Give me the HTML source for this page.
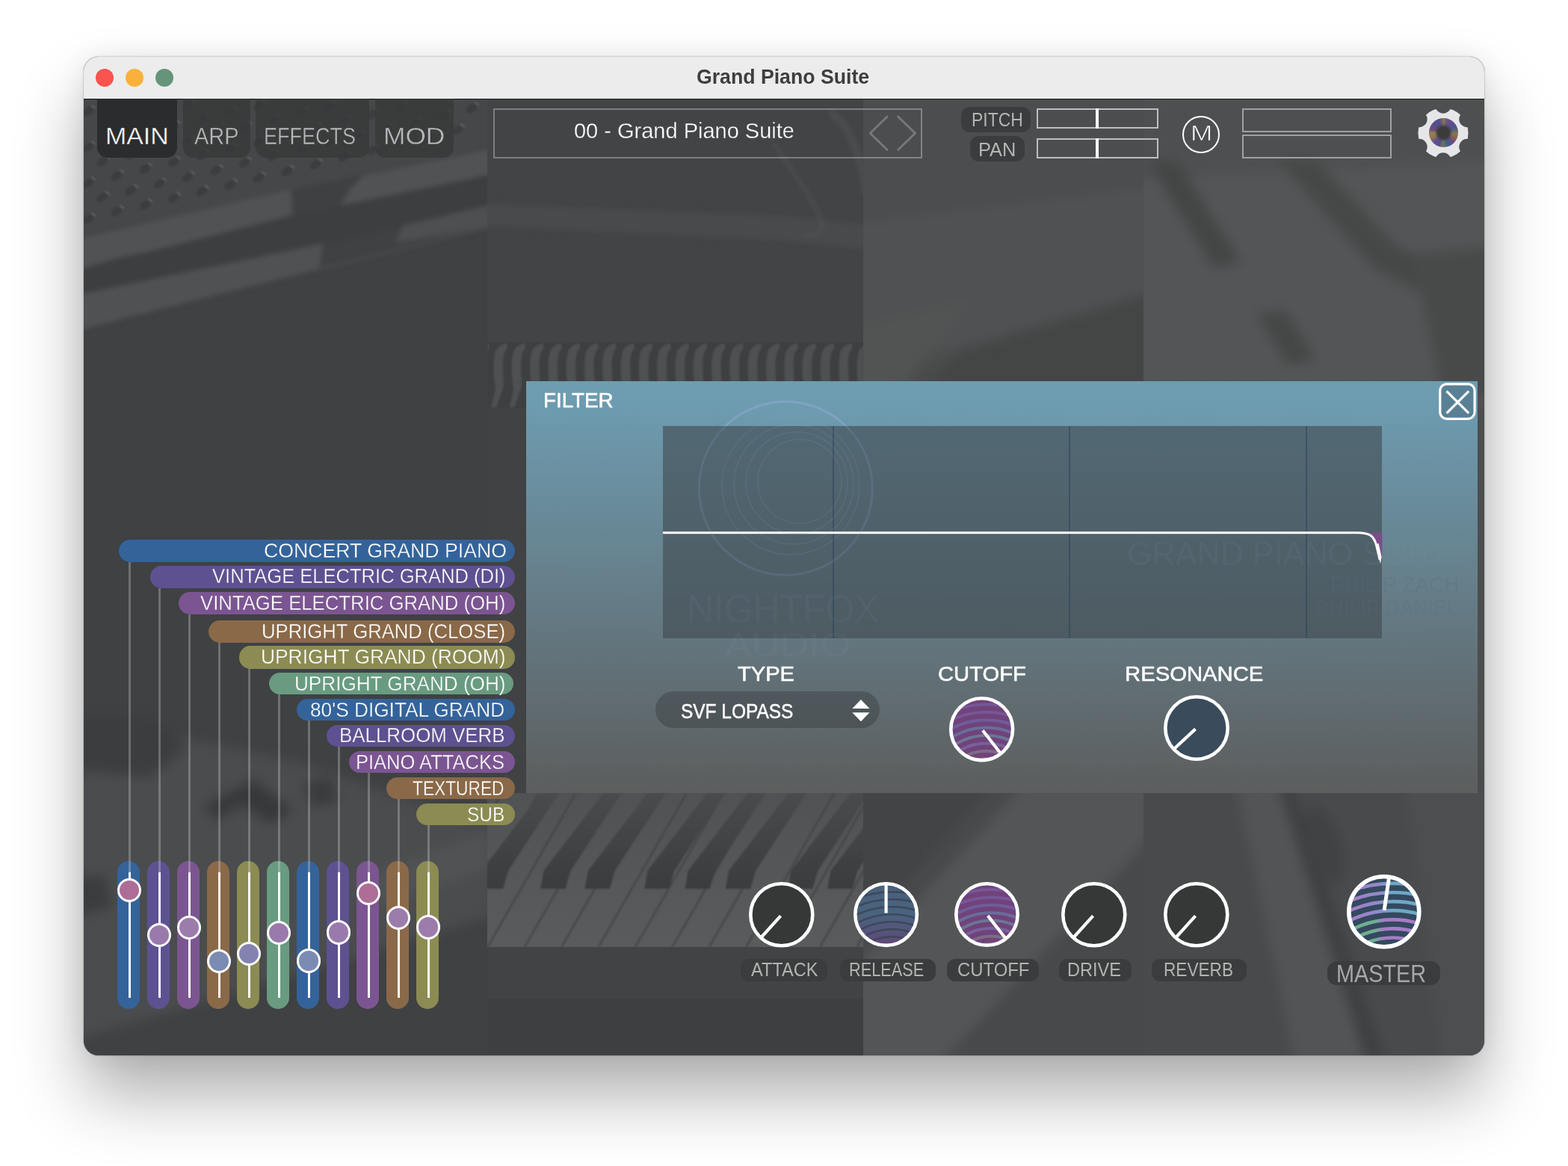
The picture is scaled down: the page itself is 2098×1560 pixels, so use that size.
<!DOCTYPE html><html><head><meta charset="utf-8"><title>Grand Piano Suite</title><style>
html,body{margin:0;padding:0;background:#fff}
body{width:2098px;height:1560px;position:relative;overflow:hidden;font-family:"Liberation Sans",sans-serif;}
.a{position:absolute}
.shadow{position:absolute;left:112px;top:75.5px;width:1874px;height:1336.5px;border-radius:20px;box-shadow:0 53px 92px rgba(0,0,0,.32),0 0 34px rgba(0,0,0,.07),0 0 2px rgba(0,0,0,.45);}
.win{position:absolute;left:112px;top:75.5px;width:1874px;height:1336.5px;border-radius:20px;overflow:hidden;background:#434547}
.stage{position:absolute;left:-112px;top:-75.5px;width:2098px;height:1560px}
.titlebar{position:absolute;left:112px;top:75px;width:1874px;height:57px;background:#ececec;box-shadow:0 1px 0 #1c1c1c}
.tl{position:absolute;width:24px;height:24px;border-radius:50%;top:92px}
.tab{position:absolute;top:132px;height:79px;border-radius:0 0 14px 14px;background:rgba(55,57,58,.8)}
.tab.on{background:#2b2c2d}
.lbl{position:absolute;background:#3a3c3d}
.pill{position:absolute;border-radius:15px}
.vline{position:absolute;width:3px;background:rgba(255,255,255,.25)}
.track{position:absolute;width:30px;border-radius:15px}
.wl{position:absolute;width:3.4px;background:#fff}
.thumb{position:absolute;width:32.4px;height:32.4px;border-radius:50%;box-sizing:border-box;border:3.5px solid #fff}
.t{position:absolute;white-space:nowrap;transform-origin:0 0}
</style></head><body>
<div class="shadow"></div><div class="win"><div class="stage">
<svg class="a" style="left:112px;top:132px" width="1874" height="1280" viewBox="112 132 1874 1280"><defs><filter id="b3" color-interpolation-filters="sRGB" x="-5%" y="-5%" width="110%" height="110%"><feGaussianBlur stdDeviation="3"/></filter><filter id="b8" color-interpolation-filters="sRGB" x="-10%" y="-10%" width="120%" height="120%"><feGaussianBlur stdDeviation="8"/></filter><filter id="b1" color-interpolation-filters="sRGB" x="-5%" y="-5%" width="110%" height="110%"><feGaussianBlur stdDeviation="1.2"/></filter><clipPath id="cL"><rect x="112" y="132" width="540" height="1280"/></clipPath><clipPath id="cM"><rect x="652" y="132" width="503" height="1280"/></clipPath><clipPath id="cR1"><rect x="1155" y="132" width="375" height="1280"/></clipPath><clipPath id="cR2"><rect x="1530" y="132" width="456" height="1280"/></clipPath><linearGradient id="bk" x1="0" y1="0" x2="0" y2="1"><stop offset="0" stop-color="#494b4d"/><stop offset="1" stop-color="#3a3c3e"/></linearGradient><linearGradient id="wk" x1="0" y1="0" x2="0" y2="1"><stop offset="0" stop-color="#505254"/><stop offset="1" stop-color="#595b5d"/></linearGradient><pattern id="ham" x="655" y="459" width="24.3" height="86" patternUnits="userSpaceOnUse"><path d="M2 86 L8 62 C5 44 4 24 8 11 C11 4 18 1 23 0 L24 7 C19 11 18 20 18 33 C18 46 21 56 16 66 L9 86 Z" fill="#4e5052"/></pattern></defs><rect x="112" y="132" width="540" height="1280" fill="#3f4143"/><rect x="652" y="132" width="503" height="1280" fill="#424446"/><rect x="1155" y="132" width="375" height="1280" fill="#4a4c4c"/><rect x="1530" y="132" width="456" height="1280" fill="#4c4e4e"/><g clip-path="url(#cL)"><g filter="url(#b3)"><polygon points="100,120 660,120 660,196 100,318" fill="#454749"/><polygon points="100,320 389.6,253.4 392,288 272,323 163,344 100,362" fill="#505254"/><polygon points="485.7,234.7 660,198 660,233 453.7,277.4 467,253.4" fill="#505254"/><polygon points="389.6,253.4 485.7,234.7 467,253.4 453.7,277.4 392,288" fill="#3e4042"/><polygon points="100,362 392,288 660,233 660,272 432,326 100,395" fill="#3c3e40"/><polygon points="100,395 432.3,325.5 427,360.2 100,443" fill="#4f5153"/><polygon points="539.1,301.4 660,273 660,302 528.4,325.5" fill="#4d4f51"/><path d="M427 360.2 L660 302" stroke="#4b4d4f" stroke-width="3" fill="none"/></g><g filter="url(#b1)"><ellipse cx="118" cy="149" rx="8" ry="5" transform="rotate(-35 118 149)" fill="#3b3d3f"/><ellipse cx="125" cy="143" rx="4" ry="1.6" transform="rotate(35 125 143)" fill="#5a5c5e"/><ellipse cx="137" cy="168" rx="8" ry="5" transform="rotate(-35 137 168)" fill="#3b3d3f"/><ellipse cx="144" cy="162" rx="4" ry="1.6" transform="rotate(35 144 162)" fill="#5a5c5e"/><ellipse cx="175" cy="159" rx="8" ry="5" transform="rotate(-35 175 159)" fill="#3b3d3f"/><ellipse cx="182" cy="153" rx="4" ry="1.6" transform="rotate(35 182 153)" fill="#5a5c5e"/><ellipse cx="213" cy="150" rx="8" ry="5" transform="rotate(-35 213 150)" fill="#3b3d3f"/><ellipse cx="220" cy="144" rx="4" ry="1.6" transform="rotate(35 220 144)" fill="#5a5c5e"/><ellipse cx="251" cy="141" rx="8" ry="5" transform="rotate(-35 251 141)" fill="#3b3d3f"/><ellipse cx="258" cy="135" rx="4" ry="1.6" transform="rotate(35 258 135)" fill="#5a5c5e"/><ellipse cx="118" cy="197" rx="8" ry="5" transform="rotate(-35 118 197)" fill="#3b3d3f"/><ellipse cx="125" cy="191" rx="4" ry="1.6" transform="rotate(35 125 191)" fill="#5a5c5e"/><ellipse cx="156" cy="187" rx="8" ry="5" transform="rotate(-35 156 187)" fill="#3b3d3f"/><ellipse cx="163" cy="181" rx="4" ry="1.6" transform="rotate(35 163 181)" fill="#5a5c5e"/><ellipse cx="194" cy="178" rx="8" ry="5" transform="rotate(-35 194 178)" fill="#3b3d3f"/><ellipse cx="201" cy="172" rx="4" ry="1.6" transform="rotate(35 201 172)" fill="#5a5c5e"/><ellipse cx="232" cy="169" rx="8" ry="5" transform="rotate(-35 232 169)" fill="#3b3d3f"/><ellipse cx="239" cy="163" rx="4" ry="1.6" transform="rotate(35 239 163)" fill="#5a5c5e"/><ellipse cx="270" cy="160" rx="8" ry="5" transform="rotate(-35 270 160)" fill="#3b3d3f"/><ellipse cx="277" cy="154" rx="4" ry="1.6" transform="rotate(35 277 154)" fill="#5a5c5e"/><ellipse cx="308" cy="151" rx="8" ry="5" transform="rotate(-35 308 151)" fill="#3b3d3f"/><ellipse cx="315" cy="145" rx="4" ry="1.6" transform="rotate(35 315 145)" fill="#5a5c5e"/><ellipse cx="346" cy="142" rx="8" ry="5" transform="rotate(-35 346 142)" fill="#3b3d3f"/><ellipse cx="353" cy="136" rx="4" ry="1.6" transform="rotate(35 353 136)" fill="#5a5c5e"/><ellipse cx="137" cy="216" rx="8" ry="5" transform="rotate(-35 137 216)" fill="#3b3d3f"/><ellipse cx="144" cy="210" rx="4" ry="1.6" transform="rotate(35 144 210)" fill="#5a5c5e"/><ellipse cx="175" cy="207" rx="8" ry="5" transform="rotate(-35 175 207)" fill="#3b3d3f"/><ellipse cx="182" cy="201" rx="4" ry="1.6" transform="rotate(35 182 201)" fill="#5a5c5e"/><ellipse cx="213" cy="198" rx="8" ry="5" transform="rotate(-35 213 198)" fill="#3b3d3f"/><ellipse cx="220" cy="192" rx="4" ry="1.6" transform="rotate(35 220 192)" fill="#5a5c5e"/><ellipse cx="251" cy="189" rx="8" ry="5" transform="rotate(-35 251 189)" fill="#3b3d3f"/><ellipse cx="258" cy="183" rx="4" ry="1.6" transform="rotate(35 258 183)" fill="#5a5c5e"/><ellipse cx="289" cy="180" rx="8" ry="5" transform="rotate(-35 289 180)" fill="#3b3d3f"/><ellipse cx="296" cy="174" rx="4" ry="1.6" transform="rotate(35 296 174)" fill="#5a5c5e"/><ellipse cx="327" cy="170" rx="8" ry="5" transform="rotate(-35 327 170)" fill="#3b3d3f"/><ellipse cx="334" cy="164" rx="4" ry="1.6" transform="rotate(35 334 164)" fill="#5a5c5e"/><ellipse cx="365" cy="161" rx="8" ry="5" transform="rotate(-35 365 161)" fill="#3b3d3f"/><ellipse cx="372" cy="155" rx="4" ry="1.6" transform="rotate(35 372 155)" fill="#5a5c5e"/><ellipse cx="403" cy="152" rx="8" ry="5" transform="rotate(-35 403 152)" fill="#3b3d3f"/><ellipse cx="410" cy="146" rx="4" ry="1.6" transform="rotate(35 410 146)" fill="#5a5c5e"/><ellipse cx="441" cy="143" rx="8" ry="5" transform="rotate(-35 441 143)" fill="#3b3d3f"/><ellipse cx="448" cy="137" rx="4" ry="1.6" transform="rotate(35 448 137)" fill="#5a5c5e"/><ellipse cx="118" cy="245" rx="8" ry="5" transform="rotate(-35 118 245)" fill="#3b3d3f"/><ellipse cx="125" cy="239" rx="4" ry="1.6" transform="rotate(35 125 239)" fill="#5a5c5e"/><ellipse cx="156" cy="235" rx="8" ry="5" transform="rotate(-35 156 235)" fill="#3b3d3f"/><ellipse cx="163" cy="229" rx="4" ry="1.6" transform="rotate(35 163 229)" fill="#5a5c5e"/><ellipse cx="194" cy="226" rx="8" ry="5" transform="rotate(-35 194 226)" fill="#3b3d3f"/><ellipse cx="201" cy="220" rx="4" ry="1.6" transform="rotate(35 201 220)" fill="#5a5c5e"/><ellipse cx="232" cy="217" rx="8" ry="5" transform="rotate(-35 232 217)" fill="#3b3d3f"/><ellipse cx="239" cy="211" rx="4" ry="1.6" transform="rotate(35 239 211)" fill="#5a5c5e"/><ellipse cx="270" cy="208" rx="8" ry="5" transform="rotate(-35 270 208)" fill="#3b3d3f"/><ellipse cx="277" cy="202" rx="4" ry="1.6" transform="rotate(35 277 202)" fill="#5a5c5e"/><ellipse cx="308" cy="199" rx="8" ry="5" transform="rotate(-35 308 199)" fill="#3b3d3f"/><ellipse cx="315" cy="193" rx="4" ry="1.6" transform="rotate(35 315 193)" fill="#5a5c5e"/><ellipse cx="346" cy="190" rx="8" ry="5" transform="rotate(-35 346 190)" fill="#3b3d3f"/><ellipse cx="353" cy="184" rx="4" ry="1.6" transform="rotate(35 353 184)" fill="#5a5c5e"/><ellipse cx="384" cy="181" rx="8" ry="5" transform="rotate(-35 384 181)" fill="#3b3d3f"/><ellipse cx="391" cy="175" rx="4" ry="1.6" transform="rotate(35 391 175)" fill="#5a5c5e"/><ellipse cx="422" cy="172" rx="8" ry="5" transform="rotate(-35 422 172)" fill="#3b3d3f"/><ellipse cx="429" cy="166" rx="4" ry="1.6" transform="rotate(35 429 166)" fill="#5a5c5e"/><ellipse cx="460" cy="162" rx="8" ry="5" transform="rotate(-35 460 162)" fill="#3b3d3f"/><ellipse cx="467" cy="156" rx="4" ry="1.6" transform="rotate(35 467 156)" fill="#5a5c5e"/><ellipse cx="498" cy="153" rx="8" ry="5" transform="rotate(-35 498 153)" fill="#3b3d3f"/><ellipse cx="505" cy="147" rx="4" ry="1.6" transform="rotate(35 505 147)" fill="#5a5c5e"/><ellipse cx="536" cy="144" rx="8" ry="5" transform="rotate(-35 536 144)" fill="#3b3d3f"/><ellipse cx="543" cy="138" rx="4" ry="1.6" transform="rotate(35 543 138)" fill="#5a5c5e"/><ellipse cx="137" cy="264" rx="8" ry="5" transform="rotate(-35 137 264)" fill="#3b3d3f"/><ellipse cx="144" cy="258" rx="4" ry="1.6" transform="rotate(35 144 258)" fill="#5a5c5e"/><ellipse cx="175" cy="255" rx="8" ry="5" transform="rotate(-35 175 255)" fill="#3b3d3f"/><ellipse cx="182" cy="249" rx="4" ry="1.6" transform="rotate(35 182 249)" fill="#5a5c5e"/><ellipse cx="213" cy="246" rx="8" ry="5" transform="rotate(-35 213 246)" fill="#3b3d3f"/><ellipse cx="220" cy="240" rx="4" ry="1.6" transform="rotate(35 220 240)" fill="#5a5c5e"/><ellipse cx="251" cy="237" rx="8" ry="5" transform="rotate(-35 251 237)" fill="#3b3d3f"/><ellipse cx="258" cy="231" rx="4" ry="1.6" transform="rotate(35 258 231)" fill="#5a5c5e"/><ellipse cx="289" cy="228" rx="8" ry="5" transform="rotate(-35 289 228)" fill="#3b3d3f"/><ellipse cx="296" cy="222" rx="4" ry="1.6" transform="rotate(35 296 222)" fill="#5a5c5e"/><ellipse cx="327" cy="218" rx="8" ry="5" transform="rotate(-35 327 218)" fill="#3b3d3f"/><ellipse cx="334" cy="212" rx="4" ry="1.6" transform="rotate(35 334 212)" fill="#5a5c5e"/><ellipse cx="365" cy="209" rx="8" ry="5" transform="rotate(-35 365 209)" fill="#3b3d3f"/><ellipse cx="372" cy="203" rx="4" ry="1.6" transform="rotate(35 372 203)" fill="#5a5c5e"/><ellipse cx="403" cy="200" rx="8" ry="5" transform="rotate(-35 403 200)" fill="#3b3d3f"/><ellipse cx="410" cy="194" rx="4" ry="1.6" transform="rotate(35 410 194)" fill="#5a5c5e"/><ellipse cx="441" cy="191" rx="8" ry="5" transform="rotate(-35 441 191)" fill="#3b3d3f"/><ellipse cx="448" cy="185" rx="4" ry="1.6" transform="rotate(35 448 185)" fill="#5a5c5e"/><ellipse cx="479" cy="182" rx="8" ry="5" transform="rotate(-35 479 182)" fill="#3b3d3f"/><ellipse cx="486" cy="176" rx="4" ry="1.6" transform="rotate(35 486 176)" fill="#5a5c5e"/><ellipse cx="517" cy="173" rx="8" ry="5" transform="rotate(-35 517 173)" fill="#3b3d3f"/><ellipse cx="524" cy="167" rx="4" ry="1.6" transform="rotate(35 524 167)" fill="#5a5c5e"/><ellipse cx="555" cy="164" rx="8" ry="5" transform="rotate(-35 555 164)" fill="#3b3d3f"/><ellipse cx="562" cy="158" rx="4" ry="1.6" transform="rotate(35 562 158)" fill="#5a5c5e"/><ellipse cx="593" cy="155" rx="8" ry="5" transform="rotate(-35 593 155)" fill="#3b3d3f"/><ellipse cx="600" cy="149" rx="4" ry="1.6" transform="rotate(35 600 149)" fill="#5a5c5e"/><ellipse cx="631" cy="145" rx="8" ry="5" transform="rotate(-35 631 145)" fill="#3b3d3f"/><ellipse cx="638" cy="139" rx="4" ry="1.6" transform="rotate(35 638 139)" fill="#5a5c5e"/><ellipse cx="118" cy="293" rx="8" ry="5" transform="rotate(-35 118 293)" fill="#3b3d3f"/><ellipse cx="125" cy="287" rx="4" ry="1.6" transform="rotate(35 125 287)" fill="#5a5c5e"/><ellipse cx="156" cy="283" rx="8" ry="5" transform="rotate(-35 156 283)" fill="#3b3d3f"/><ellipse cx="163" cy="277" rx="4" ry="1.6" transform="rotate(35 163 277)" fill="#5a5c5e"/><ellipse cx="194" cy="274" rx="8" ry="5" transform="rotate(-35 194 274)" fill="#3b3d3f"/><ellipse cx="201" cy="268" rx="4" ry="1.6" transform="rotate(35 201 268)" fill="#5a5c5e"/><ellipse cx="232" cy="265" rx="8" ry="5" transform="rotate(-35 232 265)" fill="#3b3d3f"/><ellipse cx="239" cy="259" rx="4" ry="1.6" transform="rotate(35 239 259)" fill="#5a5c5e"/><ellipse cx="270" cy="256" rx="8" ry="5" transform="rotate(-35 270 256)" fill="#3b3d3f"/><ellipse cx="277" cy="250" rx="4" ry="1.6" transform="rotate(35 277 250)" fill="#5a5c5e"/><ellipse cx="308" cy="247" rx="8" ry="5" transform="rotate(-35 308 247)" fill="#3b3d3f"/><ellipse cx="315" cy="241" rx="4" ry="1.6" transform="rotate(35 315 241)" fill="#5a5c5e"/><ellipse cx="346" cy="238" rx="8" ry="5" transform="rotate(-35 346 238)" fill="#3b3d3f"/><ellipse cx="353" cy="232" rx="4" ry="1.6" transform="rotate(35 353 232)" fill="#5a5c5e"/><ellipse cx="384" cy="229" rx="8" ry="5" transform="rotate(-35 384 229)" fill="#3b3d3f"/><ellipse cx="391" cy="223" rx="4" ry="1.6" transform="rotate(35 391 223)" fill="#5a5c5e"/><ellipse cx="422" cy="220" rx="8" ry="5" transform="rotate(-35 422 220)" fill="#3b3d3f"/><ellipse cx="429" cy="214" rx="4" ry="1.6" transform="rotate(35 429 214)" fill="#5a5c5e"/><ellipse cx="460" cy="210" rx="8" ry="5" transform="rotate(-35 460 210)" fill="#3b3d3f"/><ellipse cx="467" cy="204" rx="4" ry="1.6" transform="rotate(35 467 204)" fill="#5a5c5e"/><ellipse cx="498" cy="201" rx="8" ry="5" transform="rotate(-35 498 201)" fill="#3b3d3f"/><ellipse cx="505" cy="195" rx="4" ry="1.6" transform="rotate(35 505 195)" fill="#5a5c5e"/><ellipse cx="536" cy="192" rx="8" ry="5" transform="rotate(-35 536 192)" fill="#3b3d3f"/><ellipse cx="543" cy="186" rx="4" ry="1.6" transform="rotate(35 543 186)" fill="#5a5c5e"/><ellipse cx="574" cy="183" rx="8" ry="5" transform="rotate(-35 574 183)" fill="#3b3d3f"/><ellipse cx="581" cy="177" rx="4" ry="1.6" transform="rotate(35 581 177)" fill="#5a5c5e"/><ellipse cx="612" cy="174" rx="8" ry="5" transform="rotate(-35 612 174)" fill="#3b3d3f"/><ellipse cx="619" cy="168" rx="4" ry="1.6" transform="rotate(35 619 168)" fill="#5a5c5e"/></g><g filter="url(#b8)"><polygon points="100,1010 240,985 400,1020 660,1108 660,1225 100,1392" fill="#4a4c4e"/><polygon points="100,960 200,960 250,1000 200,1040 100,1030" fill="#3b3d3f"/><polygon points="272,1078 340,1043 392,1085 362,1102 322,1076 292,1098" fill="#36383a"/><polygon points="405,1050 440,1040 454,1070 420,1080" fill="#383a3c"/><polygon points="100,1175 140,1170 150,1215 100,1225" fill="#3a3c3e"/><polygon points="470,1180 660,1110 660,1160 500,1215" fill="#505254"/></g></g><g clip-path="url(#cM)"><g filter="url(#b3)"><polygon points="640,272 1040,288 1160,300 1160,334 1040,322 640,302" fill="#484a4c"/><path d="M1034 190 C1062 232 1092 272 1099 296 C1103 311 1090 319 1072 314" stroke="#505254" stroke-width="3.5" fill="none"/><path d="M1110 150 C1135 165 1150 200 1160 260" stroke="#4b4d4f" stroke-width="10" fill="none"/></g><rect x="652" y="545" width="503" height="516" fill="#404244"/><rect x="652" y="458" width="503" height="88" fill="#3d3f41"/><g filter="url(#b1)"><rect x="652" y="459" width="503" height="86" fill="url(#ham)"/></g><rect x="652" y="1061" width="503" height="206" fill="url(#wk)"/><rect x="652" y="1267" width="503" height="69" fill="#414345"/><rect x="652" y="1336" width="503" height="80" fill="#3d3f41"/><g filter="url(#b1)"><path d="M553.7 1267 L671.7 1061" stroke="#45474a" stroke-width="2.5"/><path d="M603.1 1267 L721.1 1061" stroke="#45474a" stroke-width="2.5"/><path d="M652.5 1267 L770.5 1061" stroke="#45474a" stroke-width="2.5"/><path d="M701.9 1267 L819.9 1061" stroke="#45474a" stroke-width="2.5"/><path d="M751.3 1267 L869.3 1061" stroke="#45474a" stroke-width="2.5"/><path d="M800.7 1267 L918.7 1061" stroke="#45474a" stroke-width="2.5"/><path d="M850.1 1267 L968.1 1061" stroke="#45474a" stroke-width="2.5"/><path d="M899.5 1267 L1017.5 1061" stroke="#45474a" stroke-width="2.5"/><path d="M948.9 1267 L1066.9 1061" stroke="#45474a" stroke-width="2.5"/><path d="M998.3 1267 L1116.3 1061" stroke="#45474a" stroke-width="2.5"/><path d="M1047.7 1267 L1165.7 1061" stroke="#45474a" stroke-width="2.5"/><path d="M1097.1 1267 L1215.1 1061" stroke="#45474a" stroke-width="2.5"/><path d="M1146.5 1267 L1264.5 1061" stroke="#45474a" stroke-width="2.5"/><path d="M1195.9 1267 L1313.9 1061" stroke="#45474a" stroke-width="2.5"/><path d="M1245.3 1267 L1363.3 1061" stroke="#45474a" stroke-width="2.5"/><polygon points="640.0,1189 673.0,1189 680.0,1165 748.0,1061 724.0,1061 644.0,1165" fill="url(#bk)"/><polygon points="723.4,1189 756.4,1189 763.4,1165 831.4,1061 807.4,1061 727.4,1165" fill="url(#bk)"/><polygon points="782.7,1189 815.7,1189 822.7,1165 890.7,1061 866.7,1061 786.7,1165" fill="url(#bk)"/><polygon points="862.3,1189 895.3,1189 902.3,1165 970.3,1061 946.3,1061 866.3,1165" fill="url(#bk)"/><polygon points="916.6,1189 949.6,1189 956.6,1165 1024.6,1061 1000.6,1061 920.6,1165" fill="url(#bk)"/><polygon points="971.0,1189 1004.0,1189 1011.0,1165 1079.0,1061 1055.0,1061 975.0,1165" fill="url(#bk)"/><polygon points="1054.3,1189 1087.3,1189 1094.3,1165 1162.3,1061 1138.3,1061 1058.3,1165" fill="url(#bk)"/><polygon points="1107.4,1189 1140.4,1189 1147.4,1165 1215.4,1061 1191.4,1061 1111.4,1165" fill="url(#bk)"/><polygon points="1160.0,1189 1193.0,1189 1200.0,1165 1268.0,1061 1244.0,1061 1164.0,1165" fill="url(#bk)"/></g></g><g clip-path="url(#cR1)"><g filter="url(#b8)"><polygon points="1140,120 1545,120 1545,390 1284,467 1140,500" fill="#4b4d4e"/><polygon points="1140,300 1545,250 1545,390 1284,467 1140,500" fill="#4f5152"/><polygon points="1140,440 1300,400 1200,530 1140,530" fill="#525454"/><polygon points="1284,470 1545,392 1545,530 1230,530" fill="#444646"/><rect x="1140" y="1040" width="410" height="400" fill="#47494b"/><polygon points="1370,1050 1540,1050 1540,1120 1260,1420 1140,1420 1140,1300" fill="#535557"/><polygon points="1140,1050 1330,1050 1140,1260" fill="#424446"/></g></g><g clip-path="url(#cR2)"><g filter="url(#b8)"><rect x="1520" y="120" width="480" height="420" fill="#4d4f50"/><polygon points="1520,240 2000,215 2000,540 1520,540" fill="#535556"/><polygon points="1535,215 1575,215 1660,350 1625,360" fill="#444646"/><polygon points="1710,215 1760,215 1870,330 2000,395 2000,440 1840,360" fill="#464848"/><polygon points="1680,420 1720,415 1760,480 1725,490" fill="#454747"/><polygon points="1890,340 2000,330 2000,530 1930,530" fill="#484a4a"/><rect x="1520" y="1040" width="480" height="400" fill="#484a4c"/><polygon points="1654,1050 1710,1050 1828,1420 1733,1420" fill="#525456"/><polygon points="1710,1050 1730,1050 1855,1420 1828,1420" fill="#3e4042"/><ellipse cx="1772" cy="1130" rx="22" ry="55" transform="rotate(-18 1772 1130)" fill="#404244"/><polygon points="1880,1050 2000,1050 2000,1420 1930,1420" fill="#4c4e50"/></g></g></svg>
<div class="titlebar"></div>
<div class="t " style="left:931.83px;top:88.85px;font-size:27.18px;line-height:27.18px;color:#3d3e40;transform:scaleX(0.9812); font-weight:bold;">Grand Piano Suite</div>
<div class="tl" style="left:128px;background:#f8534f"></div>
<div class="tl" style="left:168px;background:#f9b13c"></div>
<div class="tl" style="left:208px;background:#65947a"></div>
<div class="tab on" style="left:130px;width:107px"></div>
<div class="t " style="left:141.33px;top:166.70px;font-size:31.25px;line-height:31.25px;color:#fff;transform:scaleX(1.0826);-webkit-text-stroke:.4px #2b2c2d;">MAIN</div>
<div class="tab" style="left:245px;width:89.5px"></div>
<div class="t " style="left:260.24px;top:166.70px;font-size:31.25px;line-height:31.25px;color:#b7b8b9;transform:scaleX(0.9277);-webkit-text-stroke:.4px #3a3c3d;">ARP</div>
<div class="tab" style="left:342px;width:152px"></div>
<div class="t " style="left:353.39px;top:166.70px;font-size:31.25px;line-height:31.25px;color:#b7b8b9;transform:scaleX(0.8636);-webkit-text-stroke:.4px #3a3c3d;">EFFECTS</div>
<div class="tab" style="left:502px;width:105px"></div>
<div class="t " style="left:513.11px;top:166.70px;font-size:31.25px;line-height:31.25px;color:#b7b8b9;transform:scaleX(1.1296);-webkit-text-stroke:.4px #3a3c3d;">MOD</div>
<div class="a" style="left:660px;top:144.6px;width:574.3px;height:67.5px;box-sizing:border-box;border:2.3px solid rgba(255,255,255,.31)"></div>
<div class="t " style="left:767.60px;top:161.03px;font-size:29.22px;line-height:29.22px;color:#fff;transform:scaleX(0.9923);-webkit-text-stroke:.3px #434547;">00 - Grand Piano Suite</div>
<svg class="a" style="left:1155px;top:150px" width="80" height="58" viewBox="1155 150 80 58"><path d="M1188 155.2 L1164.3 178.2 L1188 201.3 M1200.8 155.2 L1224.5 178.2 L1200.8 201.3" fill="none" stroke="#76787b" stroke-width="2.9"/></svg>
<div class="lbl" style="left:1286px;top:143px;width:93.2px;height:33.9px;border-radius:12px"></div>
<div class="t " style="left:1299.82px;top:146.94px;font-size:26.60px;line-height:26.60px;color:#b4b5b4;transform:scaleX(0.8637);">PITCH</div>
<div class="lbl" style="left:1298.2px;top:182px;width:72.5px;height:33.9px;border-radius:12px"></div>
<div class="t " style="left:1308.81px;top:186.74px;font-size:26.60px;line-height:26.60px;color:#b4b5b4;transform:scaleX(0.9564);">PAN</div>
<div class="a" style="left:1387px;top:144.9px;width:163px;height:27.2px;box-sizing:border-box;border:2.2px solid #bdbec0"></div>
<div class="a" style="left:1466.3px;top:144.9px;width:4px;height:27.2px;background:#fff"></div>
<div class="a" style="left:1387px;top:184.9px;width:163px;height:27.2px;box-sizing:border-box;border:2.2px solid #bdbec0"></div>
<div class="a" style="left:1466.3px;top:184.9px;width:4px;height:27.2px;background:#fff"></div>
<div class="a" style="left:1582.1px;top:154.5px;width:50px;height:50px;box-sizing:border-box;border:2.7px solid #fff;border-radius:50%"></div>
<div class="t " style="left:1593.01px;top:162.99px;font-size:30.09px;line-height:30.09px;color:#fff;transform:scaleX(1.1707);-webkit-text-stroke:.7px #4a4c4e;">M</div>
<div class="a" style="left:1662px;top:145px;width:200px;height:32px;box-sizing:border-box;border:2.6px solid #9fa0a1"></div>
<div class="a" style="left:1662px;top:180px;width:200px;height:32px;box-sizing:border-box;border:2.6px solid #9fa0a1"></div>
<svg class="a" style="left:1891.4px;top:138.4px" width="80" height="80" viewBox="1891.4 138.4 80 80"><defs><mask id="gm"><circle cx="1931.4" cy="178.4" r="33.6" fill="#fff"/><circle cx="1963.4" cy="196.9" r="10.7" fill="#000"/><circle cx="1931.4" cy="215.4" r="10.7" fill="#000"/><circle cx="1899.4" cy="196.9" r="10.7" fill="#000"/><circle cx="1899.4" cy="159.9" r="10.7" fill="#000"/><circle cx="1931.4" cy="141.4" r="10.7" fill="#000"/><circle cx="1963.4" cy="159.9" r="10.7" fill="#000"/></mask></defs><circle cx="1931.4" cy="178.4" r="34" fill="#e6e6e9" mask="url(#gm)"/></svg>
<div class="a" style="left:1911.9px;top:158.3px;width:39px;height:39px;border-radius:50%;background:radial-gradient(circle,#3b3b3c 0,#3b3b3c 27%,rgba(59,59,60,0) 44%),radial-gradient(circle,rgba(70,100,112,0) 74%,rgba(70,100,112,.8) 100%),linear-gradient(rgba(62,72,96,.38),rgba(62,72,96,.38)),conic-gradient(from 0deg,#b89040 0deg,#7a58a8 18deg,#6a50a0 50deg,#4a6a90 70deg,#c08a48 95deg,#b07a40 112deg,#8a4a98 135deg,#3a68b0 160deg,#8a9058 182deg,#6a50a0 200deg,#7a58a8 228deg,#c89040 245deg,#c0a850 268deg,#904a90 285deg,#5a58a0 315deg,#6a50a0 342deg,#b89040 360deg)"></div>
<div class="track" style="left:157.0px;top:1152px;height:197.6px;background:#34639a"></div>
<div class="track" style="left:197.0px;top:1152px;height:197.6px;background:#5e5191"></div>
<div class="track" style="left:237.0px;top:1152px;height:197.6px;background:#7b5591"></div>
<div class="track" style="left:277.0px;top:1152px;height:197.6px;background:#8a6948"></div>
<div class="track" style="left:317.0px;top:1152px;height:197.6px;background:#8b8b53"></div>
<div class="track" style="left:357.0px;top:1152px;height:197.6px;background:#699b80"></div>
<div class="track" style="left:397.0px;top:1152px;height:197.6px;background:#34639a"></div>
<div class="track" style="left:437.0px;top:1152px;height:197.6px;background:#5e5191"></div>
<div class="track" style="left:477.0px;top:1152px;height:197.6px;background:#7b5591"></div>
<div class="track" style="left:517.0px;top:1152px;height:197.6px;background:#8a6948"></div>
<div class="track" style="left:557.0px;top:1152px;height:197.6px;background:#8b8b53"></div>
<div class="vline" style="left:171.8px;top:751.7px;height:415.1px"></div>
<div class="vline" style="left:211.8px;top:786.6px;height:380.2px"></div>
<div class="vline" style="left:251.8px;top:822.0px;height:344.8px"></div>
<div class="vline" style="left:291.8px;top:859.2px;height:307.6px"></div>
<div class="vline" style="left:331.8px;top:894.1px;height:272.7px"></div>
<div class="vline" style="left:371.8px;top:928.8px;height:238.0px"></div>
<div class="vline" style="left:411.8px;top:963.5px;height:203.3px"></div>
<div class="vline" style="left:451.8px;top:998.8px;height:168.0px"></div>
<div class="vline" style="left:491.8px;top:1033.8px;height:133.0px"></div>
<div class="vline" style="left:531.8px;top:1068.8px;height:98.0px"></div>
<div class="vline" style="left:571.8px;top:1103.9px;height:62.9px"></div>
<div class="pill" style="left:159.2px;top:722.1px;width:530.2px;height:30.1px;background:#34639a"></div>
<div class="t " style="left:353.17px;top:723.20px;font-size:27.47px;line-height:27.47px;color:#fff;transform:scaleX(0.9707);-webkit-text-stroke:.35px #34639a;">CONCERT GRAND PIANO</div>
<div class="pill" style="left:201.1px;top:757px;width:488.3px;height:30.1px;background:#5e5191"></div>
<div class="t " style="left:284.10px;top:757.30px;font-size:27.47px;line-height:27.47px;color:#fff;transform:scaleX(0.9297);-webkit-text-stroke:.35px #5e5191;">VINTAGE ELECTRIC GRAND (DI)</div>
<div class="pill" style="left:239.1px;top:792.3px;width:450.3px;height:30.2px;background:#7b5591"></div>
<div class="t " style="left:268.40px;top:793.20px;font-size:27.47px;line-height:27.47px;color:#fff;transform:scaleX(0.9364);-webkit-text-stroke:.35px #7b5591;">VINTAGE ELECTRIC GRAND (OH)</div>
<div class="pill" style="left:279.2px;top:829.8px;width:410.2px;height:29.9px;background:#8a6948"></div>
<div class="t " style="left:350.45px;top:830.60px;font-size:27.47px;line-height:27.47px;color:#fff;transform:scaleX(0.9344);-webkit-text-stroke:.35px #8a6948;">UPRIGHT GRAND (CLOSE)</div>
<div class="pill" style="left:319.6px;top:864.4px;width:369.8px;height:30.2px;background:#8b8b53"></div>
<div class="t " style="left:349.00px;top:865.30px;font-size:27.47px;line-height:27.47px;color:#fff;transform:scaleX(0.9598);-webkit-text-stroke:.35px #8b8b53;">UPRIGHT GRAND (ROOM)</div>
<div class="pill" style="left:359.7px;top:899.9px;width:327.3px;height:29.4px;background:#699b80"></div>
<div class="t " style="left:394.41px;top:901.40px;font-size:27.47px;line-height:27.47px;color:#fff;transform:scaleX(0.9508);-webkit-text-stroke:.35px #699b80;">UPRIGHT GRAND (OH)</div>
<div class="pill" style="left:397px;top:935px;width:292.4px;height:29px;background:#34639a"></div>
<div class="t " style="left:414.80px;top:935.60px;font-size:27.47px;line-height:27.47px;color:#fff;transform:scaleX(0.9549);-webkit-text-stroke:.35px #34639a;">80'S DIGITAL GRAND</div>
<div class="pill" style="left:436.8px;top:969.7px;width:252.6px;height:29.6px;background:#5e5191"></div>
<div class="t " style="left:453.78px;top:970.10px;font-size:27.47px;line-height:27.47px;color:#fff;transform:scaleX(0.9422);-webkit-text-stroke:.35px #5e5191;">BALLROOM VERB</div>
<div class="pill" style="left:466.8px;top:1004.8px;width:222.6px;height:29.5px;background:#7b5591"></div>
<div class="t " style="left:475.51px;top:1006.10px;font-size:27.47px;line-height:27.47px;color:#fff;transform:scaleX(0.9288);-webkit-text-stroke:.35px #7b5591;">PIANO ATTACKS</div>
<div class="pill" style="left:516.8px;top:1039.8px;width:172.6px;height:29.5px;background:#8a6948"></div>
<div class="t " style="left:552.20px;top:1040.90px;font-size:27.47px;line-height:27.47px;color:#fff;transform:scaleX(0.8276);-webkit-text-stroke:.35px #8a6948;">TEXTURED</div>
<div class="pill" style="left:556.9px;top:1074.9px;width:132.5px;height:29.5px;background:#8b8b53"></div>
<div class="t " style="left:625.03px;top:1075.50px;font-size:27.47px;line-height:27.47px;color:#fff;transform:scaleX(0.8887);-webkit-text-stroke:.35px #8b8b53;">SUB</div>
<div class="wl" style="left:171.6px;top:1166.8px;height:167.8px"></div>
<div class="thumb" style="left:157.1px;top:1174.6px;background:#ad6d97"></div>
<div class="wl" style="left:211.6px;top:1166.8px;height:167.8px"></div>
<div class="thumb" style="left:197.1px;top:1234.5px;background:#9a7aac"></div>
<div class="wl" style="left:251.6px;top:1166.8px;height:167.8px"></div>
<div class="thumb" style="left:237.1px;top:1224.6px;background:#9b7cab"></div>
<div class="wl" style="left:291.6px;top:1166.8px;height:167.8px"></div>
<div class="thumb" style="left:277.1px;top:1269.5px;background:#7b8bb1"></div>
<div class="wl" style="left:331.6px;top:1166.8px;height:167.8px"></div>
<div class="thumb" style="left:317.1px;top:1259.6px;background:#8483b0"></div>
<div class="wl" style="left:371.6px;top:1166.8px;height:167.8px"></div>
<div class="thumb" style="left:357.1px;top:1232.0px;background:#9a7aac"></div>
<div class="wl" style="left:411.6px;top:1166.8px;height:167.8px"></div>
<div class="thumb" style="left:397.1px;top:1269.3999999999999px;background:#7b8bb1"></div>
<div class="wl" style="left:451.6px;top:1166.8px;height:167.8px"></div>
<div class="thumb" style="left:437.1px;top:1231.3px;background:#9a7aac"></div>
<div class="wl" style="left:491.6px;top:1166.8px;height:167.8px"></div>
<div class="thumb" style="left:477.1px;top:1179.0px;background:#ad6d97"></div>
<div class="wl" style="left:531.6px;top:1166.8px;height:167.8px"></div>
<div class="thumb" style="left:517.1px;top:1211.5px;background:#9b7cab"></div>
<div class="wl" style="left:571.6px;top:1166.8px;height:167.8px"></div>
<div class="thumb" style="left:557.1px;top:1224.2px;background:#9b7cab"></div>
<div class="a" id="panel" style="left:704.3px;top:509.5px;width:1273px;height:551.7px;background:linear-gradient(#6e9db2 0%,#6d9aae 8%,#5d6061 96%,#5c5e5e 100%)"></div>
<div class="a" id="graph" style="left:887px;top:570px;width:962px;height:284px;background:rgba(64,74,80,.62)"></div>
<div class="a" style="left:1114px;top:570px;width:1.8px;height:284px;background:rgba(48,70,92,.62)"></div>
<div class="a" style="left:1430px;top:570px;width:1.8px;height:284px;background:rgba(48,70,92,.62)"></div>
<div class="a" style="left:1747px;top:570px;width:1.8px;height:284px;background:rgba(48,70,92,.62)"></div>
<div class="t " style="left:727.42px;top:521.63px;font-size:27.33px;line-height:27.33px;color:#fff;transform:scaleX(1.0159);-webkit-text-stroke:.55px #fff;">FILTER</div>
<svg class="a" style="left:880px;top:700px" width="980" height="70" viewBox="880 700 980 70"><path d="M1828 712.7 L1849.3 712.7 L1849.3 744 L1847 753 L1842 731 C1838.5 717 1833 712.7 1828 712.7Z" fill="#7b4d8b"/><path d="M887 712.7 H1816 C1833 712.7 1838.5 717 1842 731 L1846.2 749" fill="none" stroke="#fff" stroke-width="3.1"/><path d="M1840.3 728 L1844.6 727 L1848.6 745 L1847 754.5 Z" fill="#fff"/></svg>
<svg class="a" style="left:1920px;top:508px" width="60" height="60" viewBox="1920 508 60 60"><rect x="1926.8" y="513.8" width="46.3" height="46.5" rx="9" fill="rgba(48,72,92,.32)" stroke="#fff" stroke-width="3.2"/><path d="M1935.6 523.3 L1965.2 552.9 M1965.2 523.3 L1935.6 552.9" stroke="#fff" stroke-width="3.3" fill="none"/></svg>
<svg class="a" style="left:925px;top:528px" width="250" height="250" viewBox="925 528 250 250"><defs><clipPath id="lgc"><rect x="925" y="528" width="250" height="42"/></clipPath></defs><circle cx="1051.3" cy="653.4" r="116" fill="none" stroke="rgba(160,180,230,.30)" stroke-width="3.2" clip-path="url(#lgc)"/><g fill="none" stroke="rgba(150,170,215,.15)"><circle cx="1051.3" cy="653.4" r="116" stroke-width="3.2"/><circle cx="1058" cy="650" r="92" stroke-width="1.3"/><circle cx="1062" cy="648" r="80" stroke-width="1.3"/><circle cx="1066" cy="646" r="68" stroke-width="1.3"/><circle cx="1070" cy="644" r="56" stroke-width="1.3"/></g></svg>
<div class="t " style="left:918.52px;top:787.91px;font-size:53.05px;line-height:53.05px;color:rgba(150,172,190,.065);transform:scaleX(0.9384);">NIGHTFOX</div>
<div class="t " style="left:969.99px;top:840.51px;font-size:44.33px;line-height:44.33px;color:rgba(150,172,190,.065);transform:scaleX(1.1980);">AUDIO</div>
<div class="t " style="left:1507.64px;top:718.61px;font-size:44.33px;line-height:44.33px;color:rgba(125,150,165,.10);transform:scaleX(0.9736);">GRAND PIANO SUITE</div>
<div class="t " style="left:1780.40px;top:768.35px;font-size:29.07px;line-height:29.07px;color:rgba(84,110,124,.24);transform:scaleX(0.9651);">PHILIP ZACH</div>
<div class="t " style="left:1760.17px;top:797.73px;font-size:29.80px;line-height:29.80px;color:rgba(84,110,124,.20);transform:scaleX(0.9124);">PHILIP DANIEL</div>
<div class="t " style="left:986.66px;top:887.53px;font-size:27.91px;line-height:27.91px;color:#fff;transform:scaleX(1.0421);-webkit-text-stroke:.55px #fff;">TYPE</div>
<div class="t " style="left:1254.94px;top:887.53px;font-size:27.91px;line-height:27.91px;color:#fff;transform:scaleX(1.0465);-webkit-text-stroke:.55px #fff;">CUTOFF</div>
<div class="t " style="left:1505.40px;top:887.53px;font-size:27.91px;line-height:27.91px;color:#fff;transform:scaleX(1.0487);-webkit-text-stroke:.55px #fff;">RESONANCE</div>
<div class="a" style="left:877px;top:925px;width:300px;height:49px;border-radius:25px;background:rgba(0,0,0,.19)"></div>
<div class="t " style="left:910.92px;top:938.43px;font-size:27.91px;line-height:27.91px;color:#fff;transform:scaleX(0.8760);-webkit-text-stroke:.55px #fff;">SVF LOPASS</div>
<svg class="a" style="left:1136px;top:932px" width="32" height="38" viewBox="1136 932 32 38"><path d="M1140.3 948 L1151.9 936 L1163.5 948 Z M1140.3 953.3 L1151.9 965.3 L1163.5 953.3 Z" fill="#fff"/></svg>
<svg width="0" height="0" style="position:absolute"><defs><linearGradient id="relg" x1="0" y1="0" x2="0" y2="1"><stop offset="0" stop-color="#48607b"/><stop offset=".5" stop-color="#4a637e"/><stop offset=".8" stop-color="#57527a"/><stop offset="1" stop-color="#654876"/></linearGradient></defs></svg>
<svg class="a" style="left:1267.7px;top:930.0px" width="91" height="91" viewBox="1267.7 930.0 91 91"><defs><clipPath id="c1313975"><circle cx="1313.4" cy="975.7" r="41.400000000000006"/></clipPath></defs><circle cx="1313.4" cy="975.7" r="41.400000000000006" fill="#70437a"/><g clip-path="url(#c1313975)" fill="none"><circle cx="1319.4" cy="1063.1" r="47.9" stroke="#a08468" stroke-width="4" opacity="0.62"/><circle cx="1319.4" cy="1063.1" r="58.3" stroke="#85858f" stroke-width="4" opacity="0.62"/><circle cx="1319.4" cy="1063.1" r="68.7" stroke="#7a74b0" stroke-width="4" opacity="0.62"/><circle cx="1319.4" cy="1063.1" r="79.1" stroke="#6a94a8" stroke-width="4" opacity="0.62"/><circle cx="1319.4" cy="1063.1" r="89.5" stroke="#6688b0" stroke-width="4" opacity="0.62"/><circle cx="1319.4" cy="1063.1" r="99.9" stroke="#6f6cb0" stroke-width="4" opacity="0.62"/><circle cx="1319.4" cy="1063.1" r="110.3" stroke="#7a62a8" stroke-width="4" opacity="0.62"/><circle cx="1319.4" cy="1063.1" r="120.7" stroke="#7a62a8" stroke-width="4" opacity="0.62"/><circle cx="1319.4" cy="1063.1" r="131.1" stroke="#a08468" stroke-width="4" opacity="0.62"/></g><circle cx="1313.4" cy="975.7" r="41.400000000000006" fill="none" stroke="#fff" stroke-width="4.6"/><path d="M1314.6 977.3 L1338.8 1008.2" stroke="#fff" stroke-width="4.2" fill="none"/></svg>
<svg class="a" style="left:1554.7px;top:927.7px" width="92" height="92" viewBox="1554.7 927.7 92 92"><defs><clipPath id="c1600973"><circle cx="1600.7" cy="973.7" r="41.7"/></clipPath></defs><circle cx="1600.7" cy="973.7" r="41.7" fill="#3a4c5b"/><circle cx="1600.7" cy="973.7" r="41.7" fill="none" stroke="#fff" stroke-width="4.6"/><path d="M1599.2 975.1 L1570.3 1002.0" stroke="#fff" stroke-width="4.2" fill="none"/></svg>
<svg class="a" style="left:1000.0px;top:1177.6px" width="92" height="92" viewBox="1000.0 1177.6 92 92"><defs><clipPath id="c10451223"><circle cx="1045.8" cy="1223.4" r="41.5"/></clipPath></defs><circle cx="1045.8" cy="1223.4" r="41.5" fill="#363838"/><circle cx="1045.8" cy="1223.4" r="41.5" fill="none" stroke="#fff" stroke-width="4.6"/><path d="M1044.5 1224.9 L1018.2 1254.1" stroke="#fff" stroke-width="4.2" fill="none"/></svg>
<svg class="a" style="left:1139.9px;top:1177.8px" width="91" height="91" viewBox="1139.9 1177.8 91 91"><defs><clipPath id="c11851223"><circle cx="1185.5" cy="1223.4" r="41.300000000000004"/></clipPath></defs><circle cx="1185.5" cy="1223.4" r="41.300000000000004" fill="url(#relg)"/><g clip-path="url(#c11851223)" fill="none"><circle cx="1193.5" cy="1323.7" r="60.7" stroke="#3b4656" stroke-width="2.4" opacity="0.9"/><circle cx="1193.5" cy="1323.7" r="70.7" stroke="#3b4656" stroke-width="2.4" opacity="0.9"/><circle cx="1193.5" cy="1323.7" r="80.7" stroke="#3b4656" stroke-width="2.4" opacity="0.9"/><circle cx="1193.5" cy="1323.7" r="90.7" stroke="#3b4656" stroke-width="2.4" opacity="0.9"/><circle cx="1193.5" cy="1323.7" r="100.7" stroke="#3b4656" stroke-width="2.4" opacity="0.9"/><circle cx="1193.5" cy="1323.7" r="110.7" stroke="#3b4656" stroke-width="2.4" opacity="0.9"/><circle cx="1193.5" cy="1323.7" r="120.7" stroke="#3b4656" stroke-width="2.4" opacity="0.9"/><circle cx="1193.5" cy="1323.7" r="130.7" stroke="#3b4656" stroke-width="2.4" opacity="0.9"/><circle cx="1193.5" cy="1323.7" r="140.7" stroke="#3b4656" stroke-width="2.4" opacity="0.9"/></g><circle cx="1185.5" cy="1223.4" r="41.300000000000004" fill="none" stroke="#fff" stroke-width="4.6"/><path d="M1185.5 1221.4 L1185.5 1182.3" stroke="#fff" stroke-width="4.2" fill="none"/></svg>
<svg class="a" style="left:1275.0px;top:1177.9px" width="91" height="91" viewBox="1275.0 1177.9 91 91"><defs><clipPath id="c13201223"><circle cx="1320.5" cy="1223.4" r="41.2"/></clipPath></defs><circle cx="1320.5" cy="1223.4" r="41.2" fill="#70437a"/><g clip-path="url(#c13201223)" fill="none"><circle cx="1326.5" cy="1310.4" r="47.7" stroke="#a08468" stroke-width="4" opacity="0.62"/><circle cx="1326.5" cy="1310.4" r="58.1" stroke="#85858f" stroke-width="4" opacity="0.62"/><circle cx="1326.5" cy="1310.4" r="68.5" stroke="#7a74b0" stroke-width="4" opacity="0.62"/><circle cx="1326.5" cy="1310.4" r="78.9" stroke="#6a94a8" stroke-width="4" opacity="0.62"/><circle cx="1326.5" cy="1310.4" r="89.3" stroke="#6688b0" stroke-width="4" opacity="0.62"/><circle cx="1326.5" cy="1310.4" r="99.7" stroke="#6f6cb0" stroke-width="4" opacity="0.62"/><circle cx="1326.5" cy="1310.4" r="110.1" stroke="#7a62a8" stroke-width="4" opacity="0.62"/><circle cx="1326.5" cy="1310.4" r="120.5" stroke="#7a62a8" stroke-width="4" opacity="0.62"/><circle cx="1326.5" cy="1310.4" r="130.9" stroke="#a08468" stroke-width="4" opacity="0.62"/></g><circle cx="1320.5" cy="1223.4" r="41.2" fill="none" stroke="#fff" stroke-width="4.6"/><path d="M1321.7 1225.0 L1345.7 1255.7" stroke="#fff" stroke-width="4.2" fill="none"/></svg>
<svg class="a" style="left:1417.7px;top:1177.6px" width="92" height="92" viewBox="1417.7 1177.6 92 92"><defs><clipPath id="c14631223"><circle cx="1463.5" cy="1223.4" r="41.5"/></clipPath></defs><circle cx="1463.5" cy="1223.4" r="41.5" fill="#363838"/><circle cx="1463.5" cy="1223.4" r="41.5" fill="none" stroke="#fff" stroke-width="4.6"/><path d="M1462.2 1224.9 L1435.9 1254.1" stroke="#fff" stroke-width="4.2" fill="none"/></svg>
<svg class="a" style="left:1554.9px;top:1177.6px" width="92" height="92" viewBox="1554.9 1177.6 92 92"><defs><clipPath id="c16001223"><circle cx="1600.7" cy="1223.4" r="41.5"/></clipPath></defs><circle cx="1600.7" cy="1223.4" r="41.5" fill="#363838"/><circle cx="1600.7" cy="1223.4" r="41.5" fill="none" stroke="#fff" stroke-width="4.6"/><path d="M1599.4 1224.9 L1573.1 1254.1" stroke="#fff" stroke-width="4.2" fill="none"/></svg>
<svg class="a" style="left:1800.2px;top:1167.7px" width="104" height="104" viewBox="1800.2 1167.7 104 104"><defs><clipPath id="c18521219"><circle cx="1852" cy="1219.5" r="47.0"/></clipPath></defs><circle cx="1852" cy="1219.5" r="47.0" fill="#34495f"/><g clip-path="url(#c18521219)" fill="none"><defs><linearGradient id="mg1" gradientUnits="userSpaceOnUse" x1="1802.2" y1="0" x2="1901.8" y2="0"><stop offset="0" stop-color="#a67cc6"/><stop offset=".45" stop-color="#8f8cc8"/><stop offset=".6" stop-color="#6fa8c4"/><stop offset="1" stop-color="#6fa8c4"/></linearGradient><linearGradient id="mg2" gradientUnits="userSpaceOnUse" x1="1802.2" y1="0" x2="1901.8" y2="0"><stop offset="0" stop-color="#6fae90"/><stop offset=".38" stop-color="#6fae90"/><stop offset=".5" stop-color="#a67cc6"/><stop offset="1" stop-color="#a67cc6"/></linearGradient></defs><circle cx="1864.0" cy="1349.0" r="82.7" stroke="url(#mg2)" stroke-width="4.7"/><circle cx="1864.0" cy="1349.0" r="94.8" stroke="url(#mg2)" stroke-width="4.7"/><circle cx="1864.0" cy="1349.0" r="106.9" stroke="url(#mg2)" stroke-width="4.7"/><circle cx="1864.0" cy="1349.0" r="119.0" stroke="url(#mg2)" stroke-width="4.7"/><circle cx="1864.0" cy="1349.0" r="131.1" stroke="url(#mg1)" stroke-width="4.7"/><circle cx="1864.0" cy="1349.0" r="143.2" stroke="url(#mg1)" stroke-width="4.7"/><circle cx="1864.0" cy="1349.0" r="155.3" stroke="url(#mg1)" stroke-width="4.7"/><circle cx="1864.0" cy="1349.0" r="167.4" stroke="url(#mg1)" stroke-width="4.7"/><circle cx="1864.0" cy="1349.0" r="179.5" stroke="url(#mg1)" stroke-width="4.7"/></g><circle cx="1852" cy="1219.5" r="47.0" fill="none" stroke="#fff" stroke-width="5.6"/><path d="M1852.3 1217.5 L1858.9 1172.7" stroke="#fff" stroke-width="5" fill="none"/></svg>
<div class="lbl" style="left:991px;top:1283.3px;width:115.8px;height:29.6px;border-radius:11.5px"></div>
<div class="t " style="left:1004.95px;top:1284.66px;font-size:25.87px;line-height:25.87px;color:#b3b3b2;transform:scaleX(0.9101);">ATTACK</div>
<div class="lbl" style="left:1124.1px;top:1283.3px;width:127.9px;height:29.6px;border-radius:11.5px"></div>
<div class="t " style="left:1136.02px;top:1284.66px;font-size:25.87px;line-height:25.87px;color:#b3b3b2;transform:scaleX(0.8393);">RELEASE</div>
<div class="lbl" style="left:1267px;top:1283.3px;width:123.4px;height:29.6px;border-radius:11.5px"></div>
<div class="t " style="left:1280.80px;top:1284.66px;font-size:25.87px;line-height:25.87px;color:#b3b3b2;transform:scaleX(0.9242);">CUTOFF</div>
<div class="lbl" style="left:1417.1px;top:1283.3px;width:96.8px;height:29.6px;border-radius:11.5px"></div>
<div class="t " style="left:1427.87px;top:1284.66px;font-size:25.87px;line-height:25.87px;color:#b3b3b2;transform:scaleX(0.9103);">DRIVE</div>
<div class="lbl" style="left:1540.6px;top:1283.3px;width:127.4px;height:29.6px;border-radius:11.5px"></div>
<div class="t " style="left:1557.04px;top:1284.66px;font-size:25.87px;line-height:25.87px;color:#b3b3b2;transform:scaleX(0.8750);">REVERB</div>
<div class="lbl" style="left:1776px;top:1286px;width:151px;height:32px;border-radius:13px"></div>
<div class="t " style="left:1788.23px;top:1285.70px;font-size:33.14px;line-height:33.14px;color:#a6a7a7;transform:scaleX(0.8706);">MASTER</div>
</div></div></body></html>
